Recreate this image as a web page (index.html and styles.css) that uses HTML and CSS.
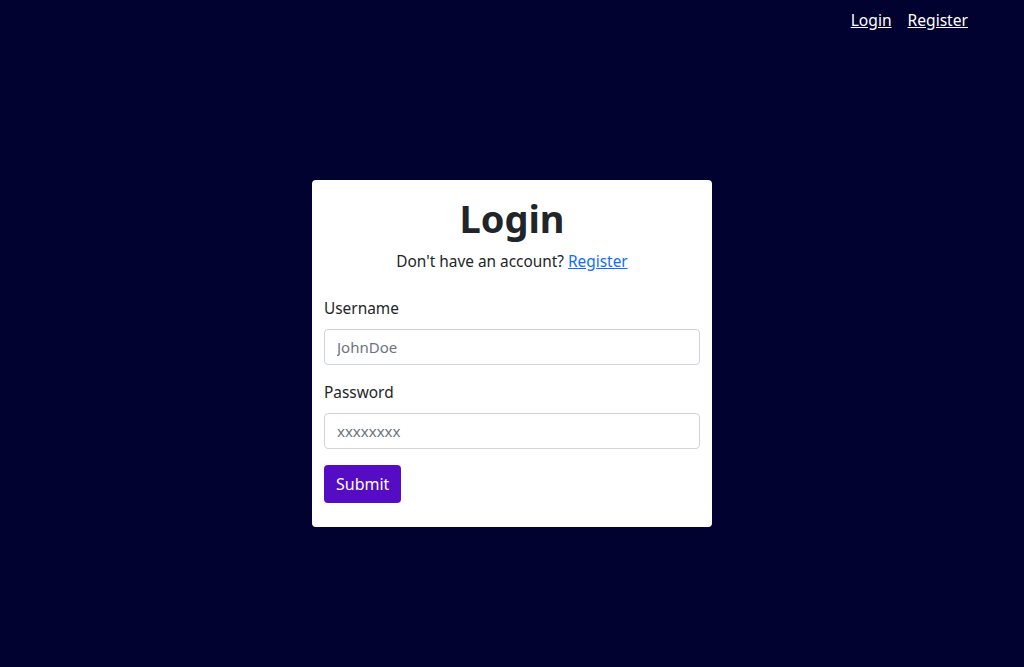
FILE: index.html
```html
<!DOCTYPE html>
<html lang="en">
<head>
<meta charset="utf-8">
<title>Login</title>
<link rel="stylesheet" href="styles.css">
</head>
<body>
<header class="topbar">
  <a class="nav-link" href="#">Login</a>
  <a class="nav-link" href="#">Register</a>
</header>
<main class="stage">
  <div class="card">
    <h1 class="title">Login</h1>
    <p class="subtitle">Don't have an account? <a href="#" class="link">Register</a></p>
    <form class="form">
      <div class="field">
        <label class="label" for="u">Username</label>
        <input class="input" id="u" type="text" placeholder="JohnDoe">
      </div>
      <div class="field">
        <label class="label" for="p">Password</label>
        <input class="input" id="p" type="password" placeholder="xxxxxxxx">
      </div>
      <button class="btn" type="button">Submit</button>
    </form>
  </div>
</main>
</body>
</html>
```

FILE: styles.css
```css
* { box-sizing: border-box; }
html, body { margin: 0; padding: 0; }
body {
  background: #020230;
  font-family: "Noto Sans", "Open Sans", sans-serif;
  font-size: 15.4px;
  line-height: 24px;
  color: #212529;
  height: 667px;
  overflow: hidden;
}
.topbar {
  height: 40px;
  display: flex;
  justify-content: flex-end;
  align-items: center;
  gap: 16px;
  padding-right: 56px;
}
.nav-link {
  color: #fff;
  text-decoration: underline;
  font-size: 15.6px;
}
.stage {
  height: 627px;
  display: flex;
  align-items: center;
  justify-content: center;
}
.card {
  width: 400px;
  background: #fff;
  border-radius: 4px;
  padding: 13px 12px 12px;
}
.title {
  margin: 0;
  text-align: center;
  font-size: 38px;
  line-height: 50px;
  font-weight: 700;
  color: #212529;
}
.subtitle {
  margin: 7px 0 0;
  text-align: center;
}
.link { color: #0d6efd; }
.form { margin-top: 23px; }
.field { margin-bottom: 16px; }
.label { display: block; margin-bottom: 8px; }
.input {
  display: block;
  width: 100%;
  height: 36px;
  padding: 6px 12px;
  border: 1px solid #ced4da;
  border-radius: 4px;
  font-family: inherit;
  font-size: 15px;
  color: #212529;
}
.input::placeholder { color: #6c757d; }
.btn {
  display: block;
  height: 38px;
  padding: 0 12px;
  background: #560bc4;
  color: #fff;
  border: none;
  border-radius: 4px;
  font-family: inherit;
  font-size: 16px;
  margin-bottom: 12px;
}
```
